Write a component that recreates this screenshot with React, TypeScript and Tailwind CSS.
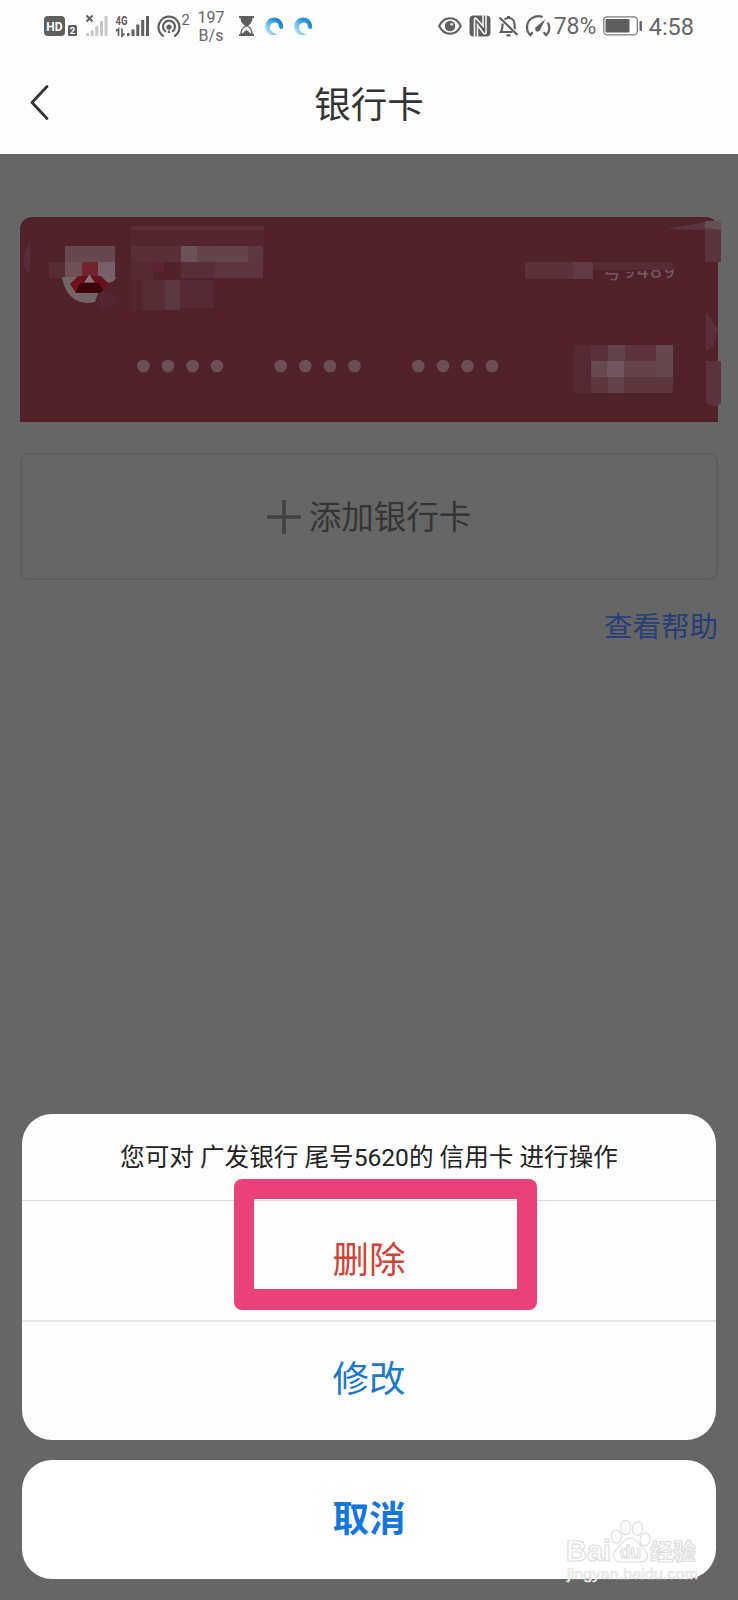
import React from "react";

const INK = "#5f5f5f";

function HdIcon() {
  return (
    <svg className="ml-[44px] shrink-0" width="34" height="22" viewBox="0 0 34 22">
      <rect x="0" y="1" width="21" height="20" rx="4" fill={INK} />
      <text x="10.5" y="15.6" fontSize="12" fontWeight="700" textAnchor="middle" fill="#fff" fontFamily="Roboto">HD</text>
      <rect x="24" y="10" width="9" height="11" rx="1.5" fill={INK} />
      <text x="28.5" y="19" fontSize="9.5" fontWeight="700" textAnchor="middle" fill="#fff" fontFamily="Roboto">2</text>
    </svg>
  );
}

function NoSignalIcon() {
  return (
    <svg className="ml-[7px] shrink-0" width="24" height="24" viewBox="0 0 24 24">
      <path d="M1.500 1.500l6 6M7.500 1.500l-6 6" stroke={INK} strokeWidth="2" />
      <g fill="#c9c9c9">
        <rect x="1" y="19" width="3" height="3" />
        <rect x="5.600" y="16.500" width="3" height="5.500" />
        <rect x="10.300" y="12" width="3" height="10" />
        <rect x="15" y="7" width="3" height="15" />
        <rect x="19.600" y="2" width="3" height="20" />
      </g>
    </svg>
  );
}

function SignalIcon() {
  return (
    <svg className="ml-[6px] shrink-0" width="36" height="24" viewBox="0 0 36 24">
      <text x="0.500" y="10.500" fontSize="12" fontWeight="700" textLength="12" lengthAdjust="spacingAndGlyphs" fill={INK} fontFamily="Roboto">4G</text>
      <path d="M1 17l2.500-2V22M7 14.500V22l2.500-2.500" fill="none" stroke={INK} strokeWidth="1.700" />
      <g fill={INK}>
        <rect x="12" y="19" width="2.500" height="3" />
        <rect x="16.500" y="15.500" width="3" height="6.500" />
        <rect x="21.300" y="10.500" width="3" height="11.500" />
        <rect x="26.200" y="6" width="3" height="16" />
        <rect x="31" y="2" width="3" height="20" />
      </g>
    </svg>
  );
}

function HotspotIcon() {
  return (
    <svg className="ml-[6px] shrink-0" width="34" height="26" viewBox="0 0 34 26">
      <g fill="none" stroke={INK} strokeWidth="2.200" strokeLinecap="round">
        <path d="M6 22.800A10.500 10.500 0 1 1 18 22.800" />
        <path d="M8.200 18.200A6 6 0 1 1 15.800 18.200" />
      </g>
      <circle cx="12" cy="14" r="2.600" fill={INK} />
      <path d="M12 16l1.500 4h-3z" fill={INK} />
      <text x="24.500" y="11.500" fontSize="14.500" fill={INK} fontFamily="Roboto">2</text>
    </svg>
  );
}

function HourglassIcon() {
  return (
    <svg className="ml-[13px] shrink-0" width="17" height="22" viewBox="0 0 17 22">
      <path d="M1 2h15M1 20h15" stroke={INK} strokeWidth="2.200" />
      <path d="M2.500 3h12c0 4-2 6-4.800 8H7.300C4.500 9 2.500 7 2.500 3z" fill={INK} />
      <path d="M7.300 11C4.500 13 3 15.500 3 19h11c0-3.500-1.500-6-4.300-8z" fill="none" stroke={INK} strokeWidth="1.300" />
      <path d="M4.500 19c.5-2 2.500-3 4-4 1.500 1 3.500 2 4 4z" fill={INK} />
    </svg>
  );
}

function RingIcon({ id }: { id: string }) {
  return (
    <svg className="ml-[9px] shrink-0" width="20" height="20" viewBox="0 0 20 20">
      <defs>
        <linearGradient id={id} x1="1" y1="0.200" x2="0.150" y2="0.800">
          <stop offset="0" stopColor="#1677c8" />
          <stop offset="0.500" stopColor="#35a2e2" />
          <stop offset="1" stopColor="#a5daf3" />
        </linearGradient>
      </defs>
      <path d="M19 12A9 9 0 1 0 4.500 17.500c3 2 7 2 9 .5-4 0-7.500-2.500-7.500-6.500 0-3 2-5 4.800-5 3 0 4 2 4.200 4.500 1 2.500 3 2.500 4 1z" fill={`url(#${id})`} />
    </svg>
  );
}

function EyeIcon() {
  return (
    <svg className="shrink-0" width="24" height="20" viewBox="0 0 24 20">
      <path d="M1.200 10C6-.200 18-.200 22.800 10 18 20.200 6 20.200 1.200 10z" fill="none" stroke={INK} strokeWidth="2" />
      <circle cx="12" cy="10" r="5.200" fill={INK} />
      <circle cx="13.600" cy="8.200" r="1.500" fill="#ddd" />
    </svg>
  );
}

function NfcIcon() {
  return (
    <svg className="ml-[7px] shrink-0" width="22" height="22" viewBox="0 0 22 22">
      <rect x="0.500" y="0.500" width="21" height="21" rx="4" fill={INK} />
      <path d="M5.500 22V4.500c0-1.500 1-1.800 2-.8L14 11V0" fill="none" stroke="#fff" strokeWidth="1.500" />
      <path d="M8.500 22V10l6 8c1 1.300 2.500 1 2.500-.8V0" fill="none" stroke="#fff" strokeWidth="1.500" />
    </svg>
  );
}

function BellOffIcon() {
  return (
    <svg className="ml-[7px] shrink-0" width="21" height="22" viewBox="0 0 21 22">
      <g fill="none" stroke={INK} strokeWidth="2.200">
        <path d="M1.500 2.500L19.500 20" />
        <path d="M4.700 8.500c-.4 3-.2 6.500-1.700 8.500h11.500" />
        <path d="M6.500 4.500c1-1 2.300-1.500 4-1.500 4 0 6 3 6 6 0 2 .2 3.500.6 5" />
        <path d="M8.500 20.300h4M9 2h3" />
      </g>
    </svg>
  );
}

function GaugeIcon() {
  return (
    <svg className="ml-[6px] shrink-0" width="27" height="24" viewBox="0 0 27 24">
      <g fill="none" stroke={INK} strokeWidth="2.200">
        <path d="M17.500 3C11 0 2 5 2 13c0 3.500 1.500 6.500 3.500 8.200l2-3" />
        <path d="M22.800 8.500c2.500 4.500 1.700 10-1.700 12.700l-2.400-3" />
      </g>
      <path d="M20.500 5l-5 10a2.700 2.700 0 1 1-3.500-2.700z" fill={INK} />
    </svg>
  );
}

function BatteryIcon() {
  return (
    <svg className="ml-[7px] shrink-0" width="40" height="20" viewBox="0 0 40 20">
      <rect x="0.800" y="0.800" width="33.500" height="18" rx="3.500" fill="#fff" stroke="#7c7c7c" strokeWidth="1.300" />
      <rect x="2.500" y="3" width="24" height="13.600" rx="1" fill={INK} />
      <rect x="36.500" y="5" width="2.400" height="10" rx="1" fill={INK} />
    </svg>
  );
}

function StatusBar() {
  return (
    <div className="flex h-[52px] items-center text-[#666]">
      <HdIcon />
      <NoSignalIcon />
      <SignalIcon />
      <HotspotIcon />
      <div className="ml-[6px] w-[28px] pt-[2px] text-center text-[16px] leading-[18px]">
        <div>197</div>
        <div>B/s</div>
      </div>
      <HourglassIcon />
      <RingIcon id="ring-a" />
      <RingIcon id="ring-b" />
      <div className="mr-[44px] ml-auto flex items-center">
        <EyeIcon />
        <NfcIcon />
        <BellOffIcon />
        <GaugeIcon />
        <span className="ml-[2px] w-[42px] pt-[1px] text-[23px] leading-none whitespace-nowrap">78%</span>
        <BatteryIcon />
        <span className="ml-[6px] pt-[3px] text-[23.5px] leading-none whitespace-nowrap">4:58</span>
      </div>
    </div>
  );
}

const DOTS = [143.5, 168, 192.500, 217, 280.700, 305.300, 330, 354.500, 418.300, 443, 467.500, 492];

type Tile = [number, number, number, number, string];

const TILES: Tile[] = [
  [131, 26, 133, 4, "#5a3039"],
  [131, 30, 133, 16, "#55262f"],
  [131, 46, 50, 16, "#5c2e38"],
  [181, 46, 16, 16, "#6b5256"],
  [197, 46, 18, 16, "#62434a"],
  [215, 46, 33, 16, "#63444a"],
  [248, 46, 15, 16, "#5d3840"],
  [131, 62, 22, 18, "#572933"],
  [153, 62, 11, 10, "#5f2433"],
  [181, 62, 34, 16, "#582e38"],
  [215, 62, 48, 16, "#5d353f"],
  [131, 80, 12, 30, "#54252e"],
  [143, 80, 22, 30, "#562c35"],
  [165, 80, 15, 30, "#5c3840"],
  [180, 80, 34, 28, "#562b35"],
  [49, 62, 17, 16, "#572d36"],
  [525, 62, 48, 17, "#5b323a"],
  [573, 62, 20, 17, "#603b43"],
  [593, 62, 80, 8, "#562c35"],
  [574, 145, 17, 48, "#572a33"],
  [591, 145, 17, 16, "#5b313b"],
  [608, 145, 17, 16, "#64424a"],
  [625, 145, 31, 16, "#5e333d"],
  [656, 145, 17, 33, "#664850"],
  [591, 161, 16, 16, "#674950"],
  [607, 161, 17, 16, "#70575f"],
  [624, 161, 32, 17, "#62424a"],
  [591, 177, 82, 16, "#5d363e"],
  [608, 177, 16, 16, "#64434a"],
];

function BankCard() {
  return (
    <div className="relative mt-[63px] h-[205px] rounded-t-[12px] bg-[#52222b]">
      <svg className="absolute left-[-20px] top-0" width="738" height="205" viewBox="0 0 738 205">
        <text x="601" y="61" fontSize="21" fill="#765a5f" textLength="74" fontFamily="Roboto, 'Noto Sans CJK SC'">号9489</text>
        <path d="M524 36h155v14l-48 5h-32v-4h-75z" fill="#52222b" />
        <g transform="translate(0 -17)">
          {TILES.map(([x, y, w, h, fill], i) => (
            <rect key={i} x={x} y={y} width={w} height={h} fill={fill} />
          ))}
        </g>
        <path d="M30 24v31h-4c-4-8-3-18 4-31z" fill="#582c3a" />
        <rect x="65" y="29" width="50" height="17" fill="#66494f" />
        <rect x="65" y="45" width="50" height="16" fill="#6c5257" />
        <rect x="98" y="45" width="17" height="16" fill="#75606a" />
        <path d="M62 60h54c-1 4-4 5-8 6-8 4-10 10-13 19-16 4-30-5-33-25z" fill="#736467" />
        <rect x="82" y="45" width="16" height="16" fill="#70252f" />
        <path d="M70 67l8-8h23l8 8-8 9H76z" fill="#6b111b" />
        <path d="M80 66h19l5 9-3 1H76z" fill="#3b0509" />
        <path d="M89.500 57.500l5 8H84z" fill="#86787a" />
        <circle cx="107" cy="83" r="10" fill="#532632" />
        {DOTS.map((cx) => (
          <circle key={cx} cx={cx} cy="149" r="6.300" fill="#6a5054" />
        ))}
        <path d="M667 12l38-7v8z" fill="#5a3540" />
        <rect x="705" y="4" width="16" height="41" fill="#5b353e" />
        <path d="M705 4h16v9l-16-2z" fill="#655058" />
        <path d="M706 95l12 17-5 18-7 4z" fill="#5b303a" />
        <path d="M706 144h15v42l-6 4-9-4z" fill="#5b343d" />
      </svg>
    </div>
  );
}

function Watermark() {
  return (
    <svg className="pointer-events-none absolute left-[560px] top-[1514px]" width="145" height="76" viewBox="0 0 145 76">
      <g fill="#fff" stroke="#dedede" strokeWidth="1.200">
        <ellipse cx="56.500" cy="22.500" rx="5" ry="6.600" transform="rotate(-10 56.500 22.500)" />
        <ellipse cx="65.800" cy="13.500" rx="5" ry="7.200" />
        <ellipse cx="77.500" cy="14.500" rx="5" ry="6.800" transform="rotate(8 77.500 14.500)" />
        <ellipse cx="85" cy="25.500" rx="5" ry="6.500" transform="rotate(12 85 25.500)" />
        <path d="M70 24c5 0 7 3.500 10 7 3 3.500 7.500 6 7.500 10.500 0 5-4 6.500-8 6.500H61c-4.500 0-7.500-2.500-7.500-6.500 0-5 4-7 7-10.500 3-3.500 4.500-7 9.500-7z" />
        <text x="6" y="47" fontSize="29" fontWeight="700" textLength="45" lengthAdjust="spacingAndGlyphs" fontFamily="'Liberation Sans', sans-serif">Bai</text>
        <text x="60" y="44" fontSize="18" fontWeight="700" textLength="21" lengthAdjust="spacingAndGlyphs" fontFamily="'Liberation Sans', sans-serif">du</text>
        <text x="90" y="46" fontSize="23" fontWeight="700" textLength="46" fontFamily="'Noto Sans CJK SC', sans-serif">经验</text>
      </g>
      <text x="7" y="65" fontSize="15" textLength="131" lengthAdjust="spacingAndGlyphs" fill="#f5f5f5" stroke="#e2e2e2" strokeWidth="0.600" fontFamily="'Liberation Sans', sans-serif">jingyan.baidu.com</text>
    </svg>
  );
}

export default function App() {
  return (
    <div className="relative flex h-[1600px] w-[738px] flex-col overflow-hidden bg-[#666] font-[Roboto,'Noto_Sans_CJK_SC',sans-serif]">
      <header className="h-[154px] shrink-0 bg-[#fefefe]">
        <StatusBar />
        <div className="grid h-[102px] grid-cols-[80px_1fr_80px] items-center">
          <svg className="ml-[29px]" width="22" height="38" viewBox="0 0 22 38">
            <path d="M18 2.500L3 18.500 18 34.500" fill="none" stroke="#333" strokeWidth="2.800" strokeLinecap="round" strokeLinejoin="round" />
          </svg>
          <h1 className="pt-[6px] text-center text-[36.5px] leading-none text-[#333]">银行卡</h1>
        </div>
      </header>

      <main className="flex flex-1 flex-col px-5">
        <BankCard />
        <button className="mt-[31px] flex h-[127px] items-center justify-center gap-[8px] rounded-[8px] border-2 border-[#5e5e5e] text-[32.5px] leading-none text-[#353535]">
          <svg width="34" height="34" viewBox="0 0 34 34">
            <path d="M17 0v34M0 17h34" stroke="#424242" strokeWidth="3.600" />
          </svg>
          <span className="pt-[3px]">添加银行卡</span>
        </button>
        <a className="mt-[34px] self-end text-[28.5px] leading-none text-[#263f78]">查看帮助</a>
      </main>

      <section className="mx-[22px] mb-[21px] flex flex-col gap-5">
        <div className="flex h-[326px] flex-col overflow-hidden rounded-[30px] bg-[#fefefe]">
          <p className="flex h-[87px] items-center justify-center border-b border-[#d9d9d9] pt-[3px] text-[24.6px] whitespace-nowrap text-[#222]">
            您可对 广发银行 尾号5620的 信用卡 进行操作
          </p>
          <button className="relative flex h-[121px] items-center justify-center border-b-2 border-[#e6e6e6] pt-[2px] text-[36.500px] leading-none text-[#d14338]">
            删除
            <span className="absolute left-[212px] top-[-22px] h-[131px] w-[303px] rounded-[8px] bg-[#ea417a] [clip-path:polygon(0_0,100%_0,100%_100%,0_100%,0_0,20px_20px,20px_110px,283px_110px,283px_20px,20px_20px)]" />
          </button>
          <button className="flex flex-1 items-center justify-center pb-[2px] text-[36.500px] leading-none text-[#1c79c9]">修改</button>
        </div>
        <button className="flex h-[119px] items-center justify-center rounded-[30px] bg-white pt-[2px] text-[36.500px] leading-none font-bold text-[#1476db]">取消</button>
      </section>
      <Watermark />
    </div>
  );
}
